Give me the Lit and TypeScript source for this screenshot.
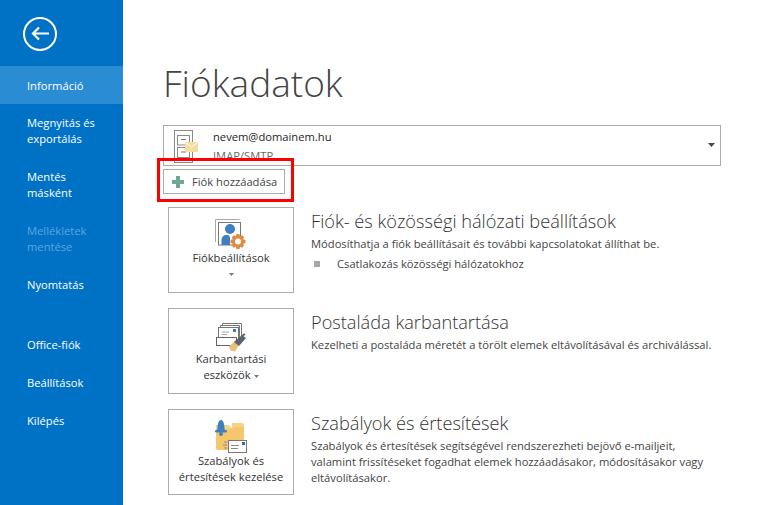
import { LitElement, html, css, svg } from "lit";
import { customElement } from "lit/decorators.js";

const personIcon = html`<svg width="34" height="34" viewBox="0 0 34 34">
  <path d="M1.500 25V2.500h24" fill="none" stroke="#a8a8a8"/>
  <rect x="4.500" y="5.500" width="22" height="22.500" fill="#fff" stroke="#777"/>
  <circle cx="16" cy="12" r="5" fill="#3f7fc1"/>
  <path d="M7.500 28v-5c0-3 2.500-5 4-5h2c2 0 2.500 2 2.500 4v6z" fill="#3f7fc1"/>
  <g transform="translate(-1 4.500)">
    <path d="M23.500 12.500h3l.6 2.200 2-.9 2 2-1 2 2.400.7v3l-2.400.7 1 2-2 2-2-1-.6 2.400h-3l-.7-2.400-2 1-2-2 1-2-2.300-.7v-3l2.300-.7-1-2 2-2 2 .9z" fill="#e38a3f"/>
    <circle cx="25" cy="20" r="3" fill="#fff"/>
  </g>
</svg>`;

const cabinetIcon = html`<svg width="28" height="36" viewBox="0 0 28 36">
  <rect x="2.500" y="1.500" width="18" height="32" fill="#fff" stroke="#8a8a8a"/>
  <rect x="5.500" y="6.500" width="12" height="9.500" fill="#fff" stroke="#8a8a8a"/>
  <rect x="5.500" y="18.500" width="12" height="10" fill="#fff" stroke="#8a8a8a"/>
  <path d="M9 10.500h5M9 23h5" stroke="#777"/>
  <rect x="13" y="13" width="13" height="10" fill="#f6dc9e"/>
  <path d="M13 13l6.500 5 6.500-5" fill="none" stroke="#fff"/>
</svg>`;

const cleanupIcon = html`<svg width="34" height="34" viewBox="0 0 34 34">
  <path d="M8.500 8V5.500h19V19" fill="none" stroke="#777"/>
  <path d="M6.500 10V7.500h19V20" fill="none" stroke="#777"/>
  <rect x="4.500" y="9.500" width="20" height="12" fill="#fff" stroke="#777"/>
  <rect x="19" y="11" width="3" height="3" fill="#3f7fc1"/>
  <path d="M8 14h7M8 16.500h5" stroke="#a5a5a5"/>
  <rect x="2.500" y="19.500" width="20" height="8" fill="#fff" stroke="#666"/>
  <path d="M21 23l4 4-4 6.500-4.500-1-1.500-4z" fill="#eabf7c"/>
  <path d="M20 24l8-7 4 3-7 8z" fill="#5c6470"/>
  <path d="M28 18l3-2" stroke="#5c6470" stroke-width="2"/>
</svg>`;

const rulesIcon = html`<svg width="34" height="35" viewBox="0 0 34 35">
  <path d="M2 6h12c2 0 2 3 4 3V4h10c1.500 0 2 .8 2 2v25H4c-1 0-2-1-2-2z" fill="#f8d184"/>
  <path d="M2 10h16l3-2h9v23H4c-1 0-2-1-2-2z" fill="#f5c76c"/>
  <path d="M3.500 10C3.500 4 5 1 7 1s3.500 3 3.500 9l1 2h-9z" fill="#3f7fc1"/>
  <rect x="1" y="11" width="12" height="2.500" rx="1.200" fill="#3f7fc1"/>
  <circle cx="7" cy="15" r="2" fill="#3f7fc1"/>
  <rect x="14.500" y="21.500" width="18" height="12" fill="#fff" stroke="#777"/>
  <rect x="28" y="23" width="3" height="3" fill="#2f6ca8"/>
  <path d="M17 26.500h8M17 29.500h7M10 23h3M9 26h4M10 29h3" stroke="#888"/>
</svg>`;

const caret = svg`<path d="M0 0h7L3.500 4z" fill="currentColor"/>`;
const smallCaret = svg`<path d="M0 0h5L2.500 3z" fill="currentColor"/>`;

@customElement("app-root")
export class AppRoot extends LitElement {
  static styles = css`
    :host {
      display: flex;
      width: 759px;
      height: 505px;
      overflow: hidden;
      background: #fff;
      font-family: "Open Sans", "Noto Sans", sans-serif;
      color: #444;
      position: relative;
    }
    .side {
      width: 123px;
      flex: none;
      background: #0072c6;
      color: #fff;
      font-size: 11.200px;
      line-height: 16px;
      display: flex;
      flex-direction: column;
    }
    .back {
      margin: 17px 0 15px 23px;
      width: 34px;
      height: 34px;
      display: block;
    }
    .item { padding: 0 10px 0 27px; }
    .item.sel { background: #2a8dd4; height: 38px; display: flex; align-items: center; padding-top: 1px; box-sizing: border-box; }
    .m1 { margin-top: 11px; }
    .m2 { margin-top: 22px; }
    .m3 { margin-top: 22px; }
    .dis { color: #5aa6de; }
    .m4 { margin-top: 22px; }
    .m5 { margin-top: 44px; }
    .m6 { margin-top: 22px; }
    .m7 { margin-top: 22px; }

    .main { flex: 1; padding-left: 40px; display: flex; flex-direction: column; }
    h1 {
      margin: 61px 0 0 0;
      font-size: 37px;
      line-height: 44px;
      font-weight: 300;
      color: #444;
      height: 44px;
    }
    .account {
      margin-top: 20px;
      width: 558px;
      height: 41px;
      box-sizing: border-box;
      border: 1px solid #ababab;
      display: flex;
      position: relative;
      overflow: hidden;
    }
    .account .ic { margin: 3px 0 0 8px; width: 32px; }
    .account .txt { margin-left: 9px; font-size: 11.200px; line-height: 16px; padding-top: 3px; }
    .account .mail { color: #262626; }
    .account .type { color: #6a6a6a; margin-top: 3px; }
    .dd { position: absolute; right: 5px; top: 17px; color: #444; }
    .add {
      margin-top: 3px;
      width: 122px;
      height: 25px;
      box-sizing: border-box;
      border: 1px solid #ababab;
      display: flex;
      align-items: center;
      font-size: 11.200px;
      color: #444;
      padding-left: 8px;
      gap: 8px;
    }
    .section { display: flex; margin-left: 5px; }
    .s1 { margin-top: 13px; }
    .s2 { margin-top: 15px; }
    .s3 { margin-top: 15px; }
    .tile {
      width: 126px;
      height: 86px;
      flex: none;
      box-sizing: border-box;
      border: 1px solid #ababab;
      display: flex;
      flex-direction: column;
      align-items: center;
      font-size: 11.200px;
      line-height: 16px;
      color: #333;
      text-align: center;
      padding-top: 9px;
    }
    .tile svg { display: block; }
    .tile .lbl { margin-top: -1px; }
    .tile .lbl svg { display: inline; vertical-align: middle; color: #777; }
    .tcaret { margin-top: 7px; color: #777; }
    .info { margin-left: 17px; }
    h2 {
      margin: 1px 0 0 0;
      font-size: 18.200px;
      line-height: 26px;
      font-weight: 300;
      color: #333;
    }
    .info p { margin: 2px 0 0 0; font-size: 11.200px; line-height: 16px; color: #444; width: 402px; }
    .bullet { display: flex; align-items: center; font-size: 11.200px; line-height: 16px; margin-top: 4px; padding-left: 3px; }
    .sq { width: 6px; height: 6px; background: #a6a6a6; margin-right: 17px; }
    .red {
      position: absolute;
      left: 157px;
      top: 158px;
      width: 137px;
      height: 44px;
      box-sizing: border-box;
      border: 3px solid #f00;
    }
  `;

  render() {
    return html`
      <nav class="side">
        <svg class="back" viewBox="0 0 34 34">
          <circle cx="17" cy="17" r="16" fill="none" stroke="#fff" stroke-width="2"/>
          <path d="M26 16.500H10M16 10.500L10 16.500l6 6" fill="none" stroke="#fff" stroke-width="2.200"/>
        </svg>
        <div class="item sel">Információ</div>
        <div class="item m1">Megnyitás és exportálás</div>
        <div class="item m2">Mentés másként</div>
        <div class="item m3 dis">Mellékletek mentése</div>
        <div class="item m4">Nyomtatás</div>
        <div class="item m5">Office-fiók</div>
        <div class="item m6">Beállítások</div>
        <div class="item m7">Kilépés</div>
      </nav>
      <main class="main">
        <h1>Fiókadatok</h1>
        <div class="account">
          <div class="ic">${cabinetIcon}</div>
          <div class="txt">
            <div class="mail">nevem@domainem.hu</div>
            <div class="type">IMAP/SMTP</div>
          </div>
          <svg class="dd" width="7" height="4" viewBox="0 0 7 4">${caret}</svg>
        </div>
        <div class="add">
          <svg width="12" height="12" viewBox="0 0 12 12"><path d="M4 0h4v4h4v4H8v4H4V8H0V4h4z" fill="#6fa797"/></svg>
          Fiók hozzáadása
        </div>
        <section class="section s1">
          <div class="tile">
            ${personIcon}
            <div class="lbl">Fiókbeállítások</div>
            <svg class="tcaret" width="5" height="3" viewBox="0 0 5 3">${smallCaret}</svg>
          </div>
          <div class="info">
            <h2>Fiók- és közösségi hálózati beállítások</h2>
            <p>Módosíthatja a fiók beállításait és további kapcsolatokat állíthat be.</p>
            <div class="bullet"><span class="sq"></span>Csatlakozás közösségi hálózatokhoz</div>
          </div>
        </section>
        <section class="section s2">
          <div class="tile">
            ${cleanupIcon}
            <div class="lbl">Karbantartási<br />eszközök <svg width="5" height="3" viewBox="0 0 5 3">${smallCaret}</svg></div>
          </div>
          <div class="info">
            <h2>Postaláda karbantartása</h2>
            <p>Kezelheti a postaláda méretét a törölt elemek eltávolításával és archiválással.</p>
          </div>
        </section>
        <section class="section s3">
          <div class="tile">
            ${rulesIcon}
            <div class="lbl">Szabályok és<br />értesítések kezelése</div>
          </div>
          <div class="info">
            <h2>Szabályok és értesítések</h2>
            <p>Szabályok és értesítések segítségével rendszerezheti bejövő e-mailjeit, valamint frissítéseket fogadhat elemek hozzáadásakor, módosításakor vagy eltávolításakor.</p>
          </div>
        </section>
      </main>
      <div class="red"></div>
    `;
  }
}
